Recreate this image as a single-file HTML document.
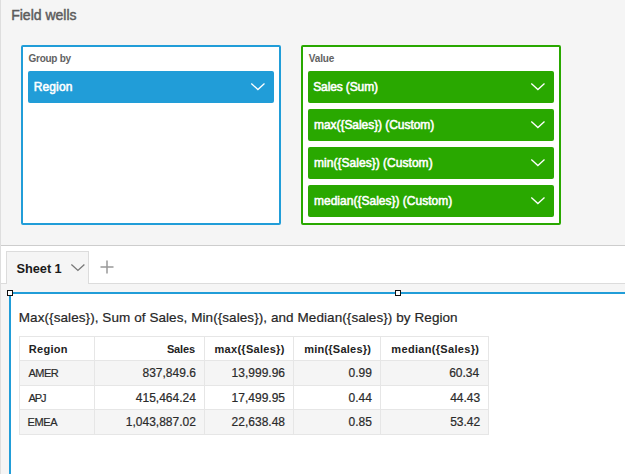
<!DOCTYPE html><html><head><meta charset="utf-8"><style>
html,body{margin:0;padding:0;width:625px;height:474px;overflow:hidden;background:#fff}
body{position:relative;font-family:"Liberation Sans",sans-serif}
.a{position:absolute;box-sizing:border-box}
.t{position:absolute;white-space:pre;font-family:"Liberation Sans",sans-serif}
</style></head><body>
<div class="a" style="left:0;top:0;width:625px;height:245px;background:#f5f5f5"></div>
<div class="a" style="left:0;top:245px;width:625px;height:1px;background:#cdcdcd"></div>
<div class="a" style="left:0;top:283px;width:625px;height:1px;background:#dcdcdc"></div>
<div class="a" style="left:0;top:284px;width:625px;height:190px;background:#f5f5f5"></div>
<div class="a" style="left:6px;top:251px;width:83px;height:33px;background:#f5f5f5;border:1px solid #dcdcdc;border-bottom:none"></div>
<div class="a" style="left:21px;top:45px;width:260px;height:180px;background:#fff;border:2px solid #219dd8;border-radius:2px"></div>
<div class="a" style="left:28px;top:71px;width:246px;height:32px;background:#219dd8;border-radius:2px"></div>
<svg style="position:absolute;left:249px;top:81px" width="19" height="12" viewBox="0 0 19 12"><path d="M2.30 2.50 L8.90 8.50 L15.50 2.50" fill="none" stroke="#fff" stroke-width="1.3"/></svg>
<div class="a" style="left:301px;top:45px;width:260px;height:180px;background:#fff;border:2px solid #29a800;border-radius:2px"></div>
<div class="a" style="left:308px;top:71px;width:246px;height:32px;background:#29a800;border-radius:2px"></div>
<svg style="position:absolute;left:529px;top:81px" width="19" height="12" viewBox="0 0 19 12"><path d="M2.30 2.50 L8.90 8.50 L15.50 2.50" fill="none" stroke="#fff" stroke-width="1.3"/></svg>
<div class="a" style="left:308px;top:109px;width:246px;height:32px;background:#29a800;border-radius:2px"></div>
<svg style="position:absolute;left:529px;top:119px" width="19" height="12" viewBox="0 0 19 12"><path d="M2.30 2.50 L8.90 8.50 L15.50 2.50" fill="none" stroke="#fff" stroke-width="1.3"/></svg>
<div class="a" style="left:308px;top:147px;width:246px;height:32px;background:#29a800;border-radius:2px"></div>
<svg style="position:absolute;left:529px;top:157px" width="19" height="12" viewBox="0 0 19 12"><path d="M2.30 2.50 L8.90 8.50 L15.50 2.50" fill="none" stroke="#fff" stroke-width="1.3"/></svg>
<div class="a" style="left:308px;top:185px;width:246px;height:32px;background:#29a800;border-radius:2px"></div>
<svg style="position:absolute;left:529px;top:195px" width="19" height="12" viewBox="0 0 19 12"><path d="M2.30 2.50 L8.90 8.50 L15.50 2.50" fill="none" stroke="#fff" stroke-width="1.3"/></svg>
<svg style="position:absolute;left:69px;top:262px" width="19" height="12" viewBox="0 0 19 12"><path d="M2.40 2.40 L8.90 8.40 L15.40 2.40" fill="none" stroke="#777" stroke-width="1.3"/></svg>
<svg style="position:absolute;left:100px;top:260px" width="14" height="14" viewBox="0 0 14 14"><path d="M7 0.5V13.5M0.5 7H13.5" stroke="#999" stroke-width="1.5" fill="none"/></svg>
<div class="a" style="left:9px;top:292px;width:620px;height:190px;background:#fff;border-top:2px solid #219dd8;border-left:2px solid #219dd8"></div>
<div class="a" style="left:7px;top:290px;width:6px;height:6px;background:#fff;border:1px solid #111"></div>
<div class="a" style="left:395px;top:290px;width:6px;height:6px;background:#fff;border:1px solid #111"></div>
<div class="a" style="left:0;top:0;width:1px;height:474px;background:#dedede"></div>
<div class="a" style="left:19px;top:361px;width:470px;height:24px;background:#f5f5f5"></div>
<div class="a" style="left:19px;top:410px;width:470px;height:24px;background:#f5f5f5"></div>
<div class="a" style="left:19px;top:336px;width:470px;height:1px;background:#e6e6e6"></div>
<div class="a" style="left:19px;top:360px;width:470px;height:1px;background:#e6e6e6"></div>
<div class="a" style="left:19px;top:385px;width:470px;height:1px;background:#e6e6e6"></div>
<div class="a" style="left:19px;top:409px;width:470px;height:1px;background:#e6e6e6"></div>
<div class="a" style="left:19px;top:434px;width:470px;height:1px;background:#e6e6e6"></div>
<div class="a" style="left:19px;top:336px;width:1px;height:99px;background:#e6e6e6"></div>
<div class="a" style="left:94px;top:336px;width:1px;height:99px;background:#e6e6e6"></div>
<div class="a" style="left:204px;top:336px;width:1px;height:99px;background:#e6e6e6"></div>
<div class="a" style="left:293px;top:336px;width:1px;height:99px;background:#e6e6e6"></div>
<div class="a" style="left:380px;top:336px;width:1px;height:99px;background:#e6e6e6"></div>
<div class="a" style="left:488px;top:336px;width:1px;height:99px;background:#e6e6e6"></div>
<div class="t" id="fw" style="top:7.95px;font-size:14px;font-weight:400;color:#5c5c5c;line-height:14px;letter-spacing:0.0px;-webkit-text-stroke:0.45px #5c5c5c;left:11.20px">Field wells</div>
<div class="t" id="gb" style="top:53.53px;font-size:10px;font-weight:700;color:#626262;line-height:10px;letter-spacing:-0.285px;left:28.60px">Group by</div>
<div class="t" id="val" style="top:53.53px;font-size:10px;font-weight:700;color:#626262;line-height:10px;letter-spacing:-0.1px;left:308.70px">Value</div>
<div class="t" id="preg" style="top:80.74px;font-size:12px;font-weight:400;color:#fff;line-height:12px;letter-spacing:0.1px;-webkit-text-stroke:0.55px #fff;left:33.80px">Region</div>
<div class="t" id="p1" style="top:80.74px;font-size:12px;font-weight:400;color:#fff;line-height:12px;letter-spacing:-0.12px;-webkit-text-stroke:0.55px #fff;left:313.20px">Sales (Sum)</div>
<div class="t" id="p2" style="top:118.74px;font-size:12px;font-weight:400;color:#fff;line-height:12px;letter-spacing:-0.055px;-webkit-text-stroke:0.55px #fff;left:314.00px">max({Sales}) (Custom)</div>
<div class="t" id="p3" style="top:156.74px;font-size:12px;font-weight:400;color:#fff;line-height:12px;letter-spacing:0.03px;-webkit-text-stroke:0.55px #fff;left:314.00px">min({Sales}) (Custom)</div>
<div class="t" id="p4" style="top:194.74px;font-size:12px;font-weight:400;color:#fff;line-height:12px;letter-spacing:0.009px;-webkit-text-stroke:0.55px #fff;left:314.00px">median({Sales}) (Custom)</div>
<div class="t" id="sh" style="top:262.66px;font-size:12.8px;font-weight:700;color:#1a1a1a;line-height:12.8px;letter-spacing:-0.066px;left:16.60px">Sheet 1</div>
<div class="t" id="title" style="top:310.57px;font-size:13.5px;font-weight:400;color:#262626;line-height:13.5px;letter-spacing:0.073px;-webkit-text-stroke:0.2px #262626;left:18.80px">Max({sales}), Sum of Sales, Min({sales}), and Median({sales}) by Region</div>
<div class="t" id="h0" style="top:344.49px;font-size:11px;font-weight:700;color:#222;line-height:11px;letter-spacing:0.28px;left:28.80px">Region</div>
<div class="t" id="h1" style="top:344.49px;font-size:11px;font-weight:700;color:#222;line-height:11px;letter-spacing:-0.15px;right:430.10px">Sales</div>
<div class="t" id="h2" style="top:344.49px;font-size:11px;font-weight:700;color:#222;line-height:11px;letter-spacing:0.288px;right:340.40px">max({Sales})</div>
<div class="t" id="h3" style="top:344.49px;font-size:11px;font-weight:700;color:#222;line-height:11px;letter-spacing:0.238px;right:253.80px">min({Sales})</div>
<div class="t" id="h4" style="top:344.49px;font-size:11px;font-weight:700;color:#222;line-height:11px;letter-spacing:0.313px;right:145.80px">median({Sales})</div>
<div class="t" id="r0c0" style="top:367.69px;font-size:11px;font-weight:400;color:#2a2a2a;line-height:11px;letter-spacing:-0.499px;-webkit-text-stroke:0.2px #2a2a2a;left:28.40px">AMER</div>
<div class="t" id="r0c1" style="top:366.84px;font-size:12px;font-weight:400;color:#2a2a2a;line-height:12px;letter-spacing:0.0px;-webkit-text-stroke:0.2px #2a2a2a;right:429.10px">837,849.6</div>
<div class="t" id="r0c2" style="top:366.84px;font-size:12px;font-weight:400;color:#2a2a2a;line-height:12px;letter-spacing:0.0px;-webkit-text-stroke:0.2px #2a2a2a;right:340.00px">13,999.96</div>
<div class="t" id="r0c3" style="top:366.84px;font-size:12px;font-weight:400;color:#2a2a2a;line-height:12px;letter-spacing:0.0px;-webkit-text-stroke:0.2px #2a2a2a;right:253.20px">0.99</div>
<div class="t" id="r0c4" style="top:366.84px;font-size:12px;font-weight:400;color:#2a2a2a;line-height:12px;letter-spacing:0.0px;-webkit-text-stroke:0.2px #2a2a2a;right:145.80px">60.34</div>
<div class="t" id="r1c0" style="top:392.69px;font-size:11px;font-weight:400;color:#2a2a2a;line-height:11px;letter-spacing:-1.0px;-webkit-text-stroke:0.2px #2a2a2a;left:28.40px">APJ</div>
<div class="t" id="r1c1" style="top:391.84px;font-size:12px;font-weight:400;color:#2a2a2a;line-height:12px;letter-spacing:0.0px;-webkit-text-stroke:0.2px #2a2a2a;right:429.10px">415,464.24</div>
<div class="t" id="r1c2" style="top:391.84px;font-size:12px;font-weight:400;color:#2a2a2a;line-height:12px;letter-spacing:0.0px;-webkit-text-stroke:0.2px #2a2a2a;right:340.00px">17,499.95</div>
<div class="t" id="r1c3" style="top:391.84px;font-size:12px;font-weight:400;color:#2a2a2a;line-height:12px;letter-spacing:0.0px;-webkit-text-stroke:0.2px #2a2a2a;right:253.20px">0.44</div>
<div class="t" id="r1c4" style="top:391.84px;font-size:12px;font-weight:400;color:#2a2a2a;line-height:12px;letter-spacing:0.0px;-webkit-text-stroke:0.2px #2a2a2a;right:144.80px">44.43</div>
<div class="t" id="r2c0" style="top:416.69px;font-size:11px;font-weight:400;color:#2a2a2a;line-height:11px;letter-spacing:-0.334px;-webkit-text-stroke:0.2px #2a2a2a;left:27.40px">EMEA</div>
<div class="t" id="r2c1" style="top:415.84px;font-size:12px;font-weight:400;color:#2a2a2a;line-height:12px;letter-spacing:0.0px;-webkit-text-stroke:0.2px #2a2a2a;right:429.10px">1,043,887.02</div>
<div class="t" id="r2c2" style="top:415.84px;font-size:12px;font-weight:400;color:#2a2a2a;line-height:12px;letter-spacing:0.0px;-webkit-text-stroke:0.2px #2a2a2a;right:340.00px">22,638.48</div>
<div class="t" id="r2c3" style="top:415.84px;font-size:12px;font-weight:400;color:#2a2a2a;line-height:12px;letter-spacing:0.0px;-webkit-text-stroke:0.2px #2a2a2a;right:253.20px">0.85</div>
<div class="t" id="r2c4" style="top:415.84px;font-size:12px;font-weight:400;color:#2a2a2a;line-height:12px;letter-spacing:0.0px;-webkit-text-stroke:0.2px #2a2a2a;right:144.80px">53.42</div>
</body></html>
